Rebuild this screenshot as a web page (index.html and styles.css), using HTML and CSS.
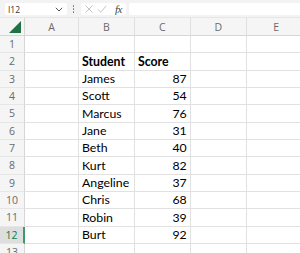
FILE: index.html
```html
<!DOCTYPE html>
<html>
<head>
<meta charset="utf-8">
<link rel="stylesheet" href="styles.css">
</head>
<body>
<div class="app">
  <div class="toolbar">
    <div class="namebox">
      <span class="ref">I12</span>
      <svg class="chev" width="8" height="5" viewBox="0 0 8 5"><path d="M0.8 0.8 L4 4 L7.2 0.8" fill="none" stroke="#555" stroke-width="1"/></svg>
    </div>
    <div class="dots"><i></i><i></i><i></i></div>
    <div class="fxbox">
      <svg width="10" height="10" viewBox="0 0 10 10"><path d="M1.5 1.5 L8.5 8.5 M8.5 1.5 L1.5 8.5" stroke="#c4c4c4" stroke-width="1" fill="none"/></svg>
      <svg width="10" height="10" viewBox="0 0 10 10"><path d="M1 5.5 L3.8 8.3 L9.2 1.8" stroke="#c4c4c4" stroke-width="1" fill="none"/></svg>
      <span class="fx">fx</span>
    </div>
    <div class="formula"></div>
  </div>
  <div class="sheet">
    <div class="corner"><svg width="14" height="13" viewBox="0 0 14 13"><path d="M13 0 L13 12 L1 12 Z" fill="#217346"/></svg></div>
    <div class="ch">A</div><div class="ch">B</div><div class="ch">C</div><div class="ch">D</div><div class="ch">E</div>

    <div class="rh">1</div><div class="c"></div><div class="c"></div><div class="c"></div><div class="c"></div><div class="c"></div>
    <div class="rh">2</div><div class="c"></div><div class="c b">Student</div><div class="c b">Score</div><div class="c"></div><div class="c"></div>
    <div class="rh">3</div><div class="c"></div><div class="c">James</div><div class="c n">87</div><div class="c"></div><div class="c"></div>
    <div class="rh">4</div><div class="c"></div><div class="c">Scott</div><div class="c n">54</div><div class="c"></div><div class="c"></div>
    <div class="rh">5</div><div class="c"></div><div class="c">Marcus</div><div class="c n">76</div><div class="c"></div><div class="c"></div>
    <div class="rh">6</div><div class="c"></div><div class="c">Jane</div><div class="c n">31</div><div class="c"></div><div class="c"></div>
    <div class="rh">7</div><div class="c"></div><div class="c">Beth</div><div class="c n">40</div><div class="c"></div><div class="c"></div>
    <div class="rh">8</div><div class="c"></div><div class="c">Kurt</div><div class="c n">82</div><div class="c"></div><div class="c"></div>
    <div class="rh">9</div><div class="c"></div><div class="c">Angeline</div><div class="c n">37</div><div class="c"></div><div class="c"></div>
    <div class="rh">10</div><div class="c"></div><div class="c">Chris</div><div class="c n">68</div><div class="c"></div><div class="c"></div>
    <div class="rh">11</div><div class="c"></div><div class="c">Robin</div><div class="c n">39</div><div class="c"></div><div class="c"></div>
    <div class="rh sel">12</div><div class="c"></div><div class="c">Burt</div><div class="c n">92</div><div class="c"></div><div class="c"></div>
    <div class="rh">13</div><div class="c"></div><div class="c"></div><div class="c"></div><div class="c"></div><div class="c"></div>
  </div>
</div>
</body>
</html>
```
FILE: styles.css
```css
* { box-sizing: border-box; }
html, body { margin: 0; padding: 0; background: #fff; }
.app { width: 300px; height: 253px; overflow: hidden; }

.toolbar {
  height: 18px;
  background: #f3f3f3;
  display: flex;
  align-items: flex-start;
  padding: 3px 0 0 5px;
  border-bottom: 1px solid #e6e6e6;
}
.namebox {
  width: 62px; height: 12px;
  background: #fff;
  border-radius: 2px;
  display: flex; align-items: center; justify-content: space-between;
  padding: 0 4px 0 3px;
  font-family: "Open Sans", sans-serif; font-size: 8.5px; color: #333;
}
.chev { margin-top: 1px; }
.dots {
  width: 13px; height: 12px;
  display: flex; flex-direction: column; align-items: center; justify-content: center; gap: 1.5px;
}
.dots i { display: block; width: 1.5px; height: 1.5px; background: #777; border-radius: 50%; }
.fxbox {
  width: 45px; height: 12px;
  margin-left: 1px;
  background: #fff; border-radius: 2px;
  display: flex; align-items: center; gap: 3px;
  padding-left: 3px;
}
.fx {
  font-family: "Liberation Serif", serif; font-style: italic; font-size: 11px; color: #444;
  margin-left: 5px; letter-spacing: -0.5px;
}
.formula {
  flex: 1; height: 12px; margin-left: 3px;
  background: #fff; border-radius: 2px 0 0 2px;
}

.sheet {
  display: grid;
  grid-template-columns: 25px 54px 56px 55.7px 56px 60px;
  grid-template-rows: 18px repeat(13, 17.33px);
  font-family: Lato, "Open Sans", sans-serif;
}
.corner {
  background: #f5f5f5;
  border-right: 1px solid #d6d6d6;
  border-bottom: 1px solid #d6d6d6;
  display: flex; align-items: flex-end; justify-content: flex-end;
  padding: 0 2px 1px 0;
}
.ch {
  background: #f5f5f5;
  border-right: 1px solid #e0e0e0;
  border-bottom: 1px solid #d6d6d6;
  font-family: "Open Sans", sans-serif; font-size: 10.5px; color: #6a6a6a;
  display: flex; align-items: center; justify-content: center;
  padding-top: 1px;
}
.rh {
  background: #f5f5f5;
  border-right: 1px solid #d6d6d6;
  border-bottom: 1px solid #e6e6e6;
  font-family: "Open Sans", sans-serif; font-size: 10.5px; color: #6a6a6a;
  display: flex; align-items: center; justify-content: center;
}
.rh.sel {
  background: #dedede;
  color: #107c41;
  border-right: 2px solid #3f9a6a;
}
.c {
  border-right: 1px solid #e1e1e1;
  border-bottom: 1px solid #e1e1e1;
  font-size: 12.3px; color: #000;
  display: flex; align-items: flex-end;
  padding: 0 3px 1px 3px;
  white-space: nowrap;
}
.c.b { font-weight: 700; }
.c.n { justify-content: flex-end; }
```
